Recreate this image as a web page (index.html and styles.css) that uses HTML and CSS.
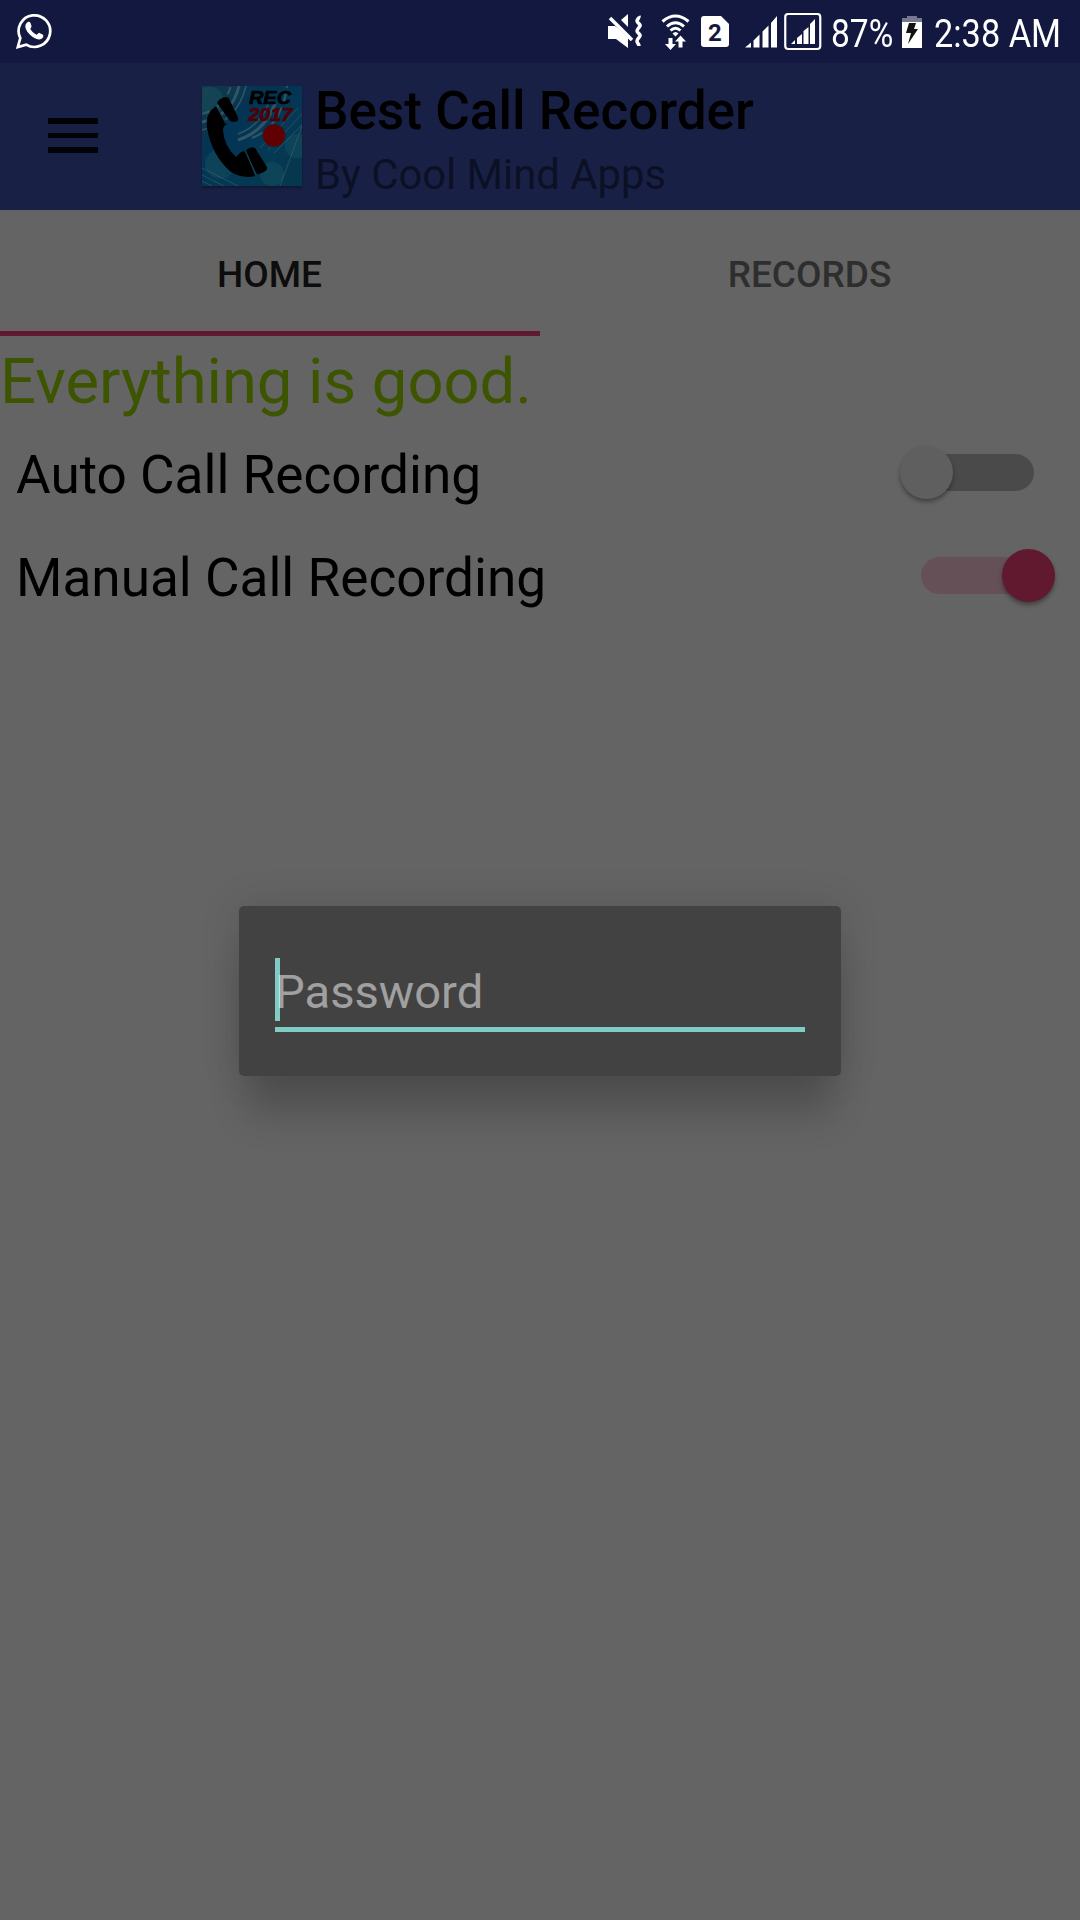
FILE: index.html
```html
<!DOCTYPE html>
<html lang="en">
<head>
<meta charset="utf-8">
<title>Best Call Recorder</title>
<link rel="stylesheet" href="styles.css">
</head>
<body>
<div class="screen">
  <div class="status-bar">
    <svg class="whatsapp" viewBox="0 0 36 36" width="36" height="36">
      <path d="M1.8 34 L4.3 25.2 A15.8 15.8 0 1 1 10.2 31.6 Z" fill="none" stroke="#fff" stroke-width="2.7" stroke-linejoin="miter"/>
      <path d="M11.5 9.2c1.600-.7 2.400-.3 3 .9l1 2.800c.4 1.200-1.600 2.300-1.100 3.200 1.300 2.500 3.500 4.500 6 5.600 1 .4 2-2.200 3-1.800l3.200 1.500c1.200.6.8 2.600-.1 3.700-1.500 1.700-4 1.600-6.400.7-4.600-1.700-8.900-6-10.400-10.200-.8-2.600-.4-5.200 1.800-6.400z" fill="#fff"/>
    </svg>
    <div class="status-right">
      <svg class="status-icons" viewBox="0 0 216 40" width="216" height="40" fill="#fff">
        <path d="M0 13h7l4 3 9 9v10L8 26H0z"/>
        <path d="M13 7l7-6v13z"/>
        <path d="M2 5L24 27" fill="none" stroke="#fff" stroke-width="3.500"/>
        <path d="M31 3c1 2-2 3-2 5s4 3 3 5-3 3-3 5 4 3 3 5-3 3-3 5 2 3 2 5" fill="none" stroke="#fff" stroke-width="3.500"/>
        <g fill="none" stroke="#fff" stroke-width="3">
          <path d="M54.500 8.500Q67.500-2.500 80.500 8.500"/>
          <path d="M59 13.500Q67.500 6 76 13.500"/>
          <path d="M62.500 17.500Q67.500 13 72.500 17.500"/>
        </g>
        <path d="M64.500 20.500q3-3 6 0l-3 3z"/>
        <path d="M60.500 25h4v6h3.500l-5.500 6-5.500-6h3.500zM70.500 34.500v-6H67l5.500-6 5.500 6h-3.500v6z"/>
        <path d="M96 3h17l8 8v20q0 3-3 3H96q-3 0-3-3V6q0-3 3-3z"/>
        <text class="sim-number" x="107" y="27.500" text-anchor="middle">2</text>
        <path d="M137 34.500l6-5v5zM145.500 27.500l6-6v13h-6zM154.500 18.500l6-6v22h-6zM163 10l6-7v31.500h-6z"/>
        <rect x="177.250" y="1" width="35" height="35" rx="3" fill="none" stroke="#fff" stroke-width="2.200"/>
        <path d="M183 31l4-4v4zM189 25l5-4v10h-5zM195.500 18l5-4v17h-5zM202 11l5-5v25h-5z"/>
      </svg>
      <span class="battery-level">87%</span>
      <svg class="battery" viewBox="0 0 20 32" width="20" height="32">
        <path d="M0 6V2h5V0h10v2h5v4z" fill="#76788f"/>
        <path d="M0 6h20v26H0z" fill="#fff"/>
        <path d="M7 7h7l-2 6h4L6 28l3-11H4z" fill="#111"/>
      </svg>
      <span class="clock">2:38 AM</span>
    </div>
  </div>

  <header class="app-bar">
    <div class="menu"><i></i><i></i><i></i></div>
    <svg class="logo" viewBox="0 0 100 100" width="100" height="100">
      <defs>
        <linearGradient id="sky" x1="0" y1="0" x2="1" y2="1">
          <stop offset="0" stop-color="#143948"/><stop offset=".35" stop-color="#033454"/>
          <stop offset=".7" stop-color="#043954"/><stop offset="1" stop-color="#06384c"/>
        </linearGradient>
        <clipPath id="frame"><path d="M0 0h100v100H0z"/></clipPath>
      </defs>
      <g clip-path="url(#frame)">
        <path d="M0 0h100v100H0z" fill="url(#sky)"/>
        <g fill="#1c5662" opacity=".4"><circle cx="95" cy="60" r="12"/><circle cx="18" cy="78" r="15"/><circle cx="70" cy="88" r="12"/><circle cx="8" cy="15" r="14"/></g>
        <g fill="none" stroke="#4d6a73" opacity=".6">
          <path d="M0 36q30-6 37-36M36 54Q62 46 73 18" stroke-width="3"/>
          <path d="M0 44q35-8 44-44M36 48Q58 40 66 18" stroke-width="1.500"/>
          <path d="M50 52Q80 40 85 0" stroke-width="2" stroke-dasharray="12 4"/>
          <path d="M0 28q22-6 29-28" stroke-width="2" stroke-dasharray="8 3"/>
          <path d="M0 82l36 18M0 89l22 11M0 95l10 5M58 62l38-40M66 64l34-36M72 67l28-28M78 100l22-60" stroke-width=".8"/>
        </g>
        <path d="M15 17q2-4 6-5.500 4-1.500 6 1l9 19q1 3-2 4-6 1-7-2z" fill="#000"/>
        <path d="M14 20Q3 27 5 42q5 28 24 44 12 7 24 4L44 66q-4-2-7 2l-3 3Q22 60 21 44q0-4 4-6z" fill="#000"/>
        <path d="M44 64q5-4 9-2l12 19q1 3-3 5l-5 2q-3 1-4-2z" fill="#000"/>
        <path d="M14 19l10 19M43 65l11 23" stroke="#1b4352" stroke-width="1"/>
        <circle cx="72" cy="49.500" r="11.300" fill="#600002" stroke="#26232b"/>
        <text class="logo-rec" x="47" y="17.500" textLength="42" lengthAdjust="spacingAndGlyphs">REC</text>
        <text class="logo-year" x="46" y="34.500" textLength="44" lengthAdjust="spacingAndGlyphs">2017</text>
      </g>
    </svg>
    <div class="titles">
      <div class="title">Best Call Recorder</div>
      <div class="subtitle">By Cool Mind Apps</div>
    </div>
  </header>

  <nav class="tabs">
    <div class="tab active">HOME</div>
    <div class="tab">RECORDS</div>
  </nav>

  <main class="content">
    <div class="status-message">Everything is good.</div>
    <div class="setting">
      <span>Auto Call Recording</span>
      <div class="switch"><div class="thumb"></div></div>
    </div>
    <div class="setting">
      <span>Manual Call Recording</span>
      <div class="switch on"><div class="thumb"></div></div>
    </div>
  </main>

  <div class="dialog">
    <div class="field"><span class="caret"></span><span class="hint">Password</span></div>
  </div>
</div>
</body>
</html>
```
FILE: styles.css
```css
* { box-sizing: border-box; }
body { margin: 0; }
.screen {
  position: relative;
  width: 1080px;
  height: 1920px;
  overflow: hidden;
  background: #646464;
  color: #000;
  font-family: Roboto, "Liberation Sans", sans-serif;
  white-space: nowrap;
}
.status-bar {
  display: flex;
  justify-content: space-between;
  height: 63px;
  padding: 13px 21px 0 16px;
  background: #131840;
  color: #fff;
}
.status-right { display: flex; font-size: 39px; line-height: 42px; }
.sim-number { font: 700 24px Roboto, sans-serif; fill: #131840; }
.battery-level, .clock { transform-origin: 0 0; }
.battery-level { width: 60px; margin-left: 7px; transform: scaleX(.86); }
.battery { margin: 3px 12px 0 11px; }
.clock { width: 125px; transform: scaleX(.88); }

.app-bar {
  display: flex;
  height: 147px;
  padding: 23px 0 0 48px;
  background: #192046;
}
.menu { display: flex; flex-direction: column; gap: 9px; width: 50px; margin: 32px 104px 0 0; }
.menu i { height: 5.500px; background: #020307; }
.logo { filter: drop-shadow(0 2px 1px rgba(0, 0, 0, .3)); }
.logo-rec, .logo-year { font: italic 700 17.500px "Liberation Sans", sans-serif; stroke: #000; stroke-width: .7px; }
.logo-year { fill: #500006; stroke: #500006; }
.titles { margin-left: 13px; }
.title { font-size: 53.100px; font-weight: 500; line-height: 62px; margin-top: -6px; }
.subtitle { font-size: 41.800px; line-height: 50px; margin-top: 8px; color: #0c1024; }

.tabs { display: flex; height: 126px; }
.tab {
  display: flex;
  align-items: center;
  justify-content: center;
  flex: 1;
  padding: 7px 1px 0 0;
  border-bottom: 5px solid transparent;
  font-size: 37px;
  font-weight: 500;
  color: #2e2e2e;
}
.active { border-color: #611931; color: #0d0d0d; }

.status-message { height: 87px; padding-top: 7px; font-size: 63.300px; line-height: 76px; color: #3d5500; }
.setting {
  display: flex;
  align-items: center;
  justify-content: space-between;
  height: 103px;
  padding: 0 46px 0 16px;
  font-size: 53.150px;
}
.setting:last-child { padding-right: 34px; }
.switch {
  display: flex;
  align-items: center;
  width: 125px;
  height: 37px;
  margin-bottom: 4px;
  border-radius: 19px;
  background: #4a4a4a;
}
.thumb {
  width: 53px;
  height: 53px;
  flex: none;
  margin-left: -9px;
  border-radius: 50%;
  background: #5f5f5f;
  box-shadow: 0 3px 4px rgba(0, 0, 0, .35);
}
.on { justify-content: flex-end; background: #645056; }
.on .thumb { margin: 0 -9px 0 0; background: #61192f; }

.dialog {
  position: absolute;
  left: 239px;
  top: 906px;
  width: 602px;
  height: 170px;
  padding: 52px 36px 0;
  border-radius: 5px;
  background: #424242;
  box-shadow: 0 46px 36px -8px rgba(0, 0, 0, .19), 0 0 40px rgba(0, 0, 0, .13);
}
.field { display: flex; height: 74px; border-bottom: 5px solid #80cbc4; }
.caret { width: 5px; height: 63px; background: #80cbc4; }
.hint { margin-left: -5px; font-size: 47.150px; line-height: 68px; color: rgba(255, 255, 255, .5); }
```
